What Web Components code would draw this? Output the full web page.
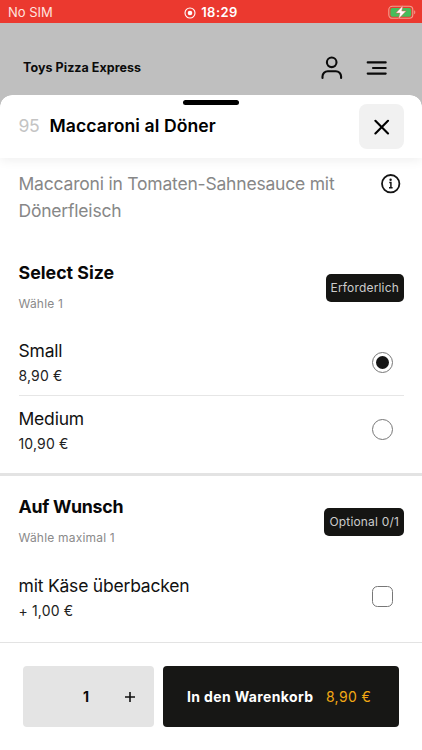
<!DOCTYPE html>
<html lang="de">
<head>
<meta charset="utf-8">
<title>Toys Pizza Express</title>
<style>
html,body{margin:0;height:100%;overflow:hidden;background:#fff}
body{font-family:Inter,"Liberation Sans",sans-serif;color:#080808}
</style>
</head>
<body>
<order-app></order-app>
<script>
const define = (name, markup) => {
  const template = document.createElement('template');
  template.innerHTML = markup;
  customElements.define(name, class extends HTMLElement {
    constructor() {
      super();
      this.attachShadow({mode: 'open'}).append(template.content.cloneNode(true));
    }
  });
};

define('status-bar', `
<style>
:host{display:grid;grid-template-columns:1fr auto 1fr;align-items:center;height:23px;background:#eb392f;color:#fff;font-size:13px;line-height:23px;box-sizing:border-box;padding:1px 6px 0 8px}
.carrier{color:#ffe3df;letter-spacing:0}
.time{display:flex;align-items:center;gap:5px;font-weight:600;letter-spacing:.45px;margin-left:-2px}
.battery{justify-self:end}
svg{display:block}
</style>
<span class="carrier">No SIM</span>
<span class="time"><svg width="12" height="12" viewBox="0 0 12 12"><circle cx="6" cy="6" r="5" fill="none" stroke="#fff" stroke-width="1.1"/><circle cx="6" cy="6" r="2.3" fill="#fff"/></svg><span>18:29</span></span>
<svg class="battery" width="28" height="16" viewBox="0 0 28 16"><g transform="translate(0 .5)"><rect x=".8" y=".8" width="24" height="12" rx="3.5" fill="none" stroke="#f2a08f" stroke-width="1.1"/><rect x="2.4" y="2.4" width="20.8" height="8.8" rx="2" fill="#46bd5b"/><path d="M26.2 4.8c1.5.5 1.5 3.5 0 4z" fill="#f2a08f"/><path d="M15-.1 7.8 7.6h4.2l-1.6 6 7.8-8.1h-4.4z" fill="#fff" stroke="#e0584a" stroke-width=".5"/></g></svg>`);

define('shop-bar', `
<style>
:host{display:flex;align-items:center;height:89px;box-sizing:border-box;padding:0 34px 0 23px;background:#bfbfbf;color:#0b0b0b}
.name{flex:1;font-size:12.5px;font-weight:700;letter-spacing:.05px}
svg{display:block}
.user{margin-right:22px}
</style>
<span class="name">Toys Pizza Express</span>
<svg class="user" width="24" height="26" viewBox="0 0 24 26" fill="none" stroke="#0b0b0b" stroke-width="2.1" stroke-linecap="round"><circle cx="11.7" cy="7.3" r="4.8"/><path d="M2.5 23v-1.5a5.3 5.3 0 0 1 5.3-5.3h8a5.3 5.3 0 0 1 5.3 5.3V23"/></svg>
<svg width="22" height="16" viewBox="0 0 22 16" fill="none" stroke="#0b0b0b" stroke-width="2.1" stroke-linecap="round"><path d="M1.7 2.4h18M7 8h12.7M1.7 13.6h18"/></svg>`);

define('sheet-header', `
<style>
:host{display:flex;align-items:center;height:63px;box-sizing:border-box;padding:0 18px 0 18.5px;background:#fff;border-radius:12px 12px 0 0;position:relative;box-shadow:0 2px 12px rgba(0,0,0,.07);clip-path:inset(0 0 -16px 0 round 12px 12px 0 0)}
.grip{position:absolute;left:183px;top:5px;width:56px;height:5px;border-radius:3px;background:#000}
h1{flex:1;margin:0;padding-bottom:2px;font-size:17.6px;line-height:24px;font-weight:600;color:#000;display:flex;gap:10px;letter-spacing:.08px}
.no{font-weight:400;color:#c4c4c4;letter-spacing:-.3px}
.close{display:grid;place-items:center;width:45px;height:45px;border-radius:8px;background:#f1f1f1}
svg{display:block}
</style>
<div class="grip"></div>
<h1><span class="no"><slot name="number"></slot></span><span><slot></slot></span></h1>
<div class="close"><svg width="16" height="16" viewBox="0 0 16 16" fill="none" stroke="#000" stroke-width="2.1" stroke-linecap="round"><path d="M1.4 1.8 14 14.4M14 1.8 1.4 14.4"/></svg></div>`);

define('dish-description', `
<style>
:host{display:flex;justify-content:space-between;align-items:flex-start;padding:12px 21px 0 18.5px;height:103px;box-sizing:border-box;color:#878787;font-size:17.5px;line-height:27px;letter-spacing:-.2px}
p{margin:0;width:325px}
svg{display:block;margin-top:4px}
</style>
<p><slot></slot></p>
<svg width="20" height="20" viewBox="0 0 20 20" fill="none" stroke="#141414"><circle cx="9.7" cy="9.7" r="8.7" stroke-width="1.8"/><path d="M8.3 8.5h1.6v5.2M8 13.8h3.6" stroke-width="1.5"/><circle cx="9.6" cy="5.7" r="1.2" fill="#141414" stroke="none"/></svg>`);

define('option-group', `
<style>
:host{display:block;padding:0 18px 0 18.5px}
header{display:flex;justify-content:space-between;align-items:flex-start;height:68px}
h2{margin:0;font-size:17.8px;line-height:24px;font-weight:700;letter-spacing:var(--title-spacing,0);color:#080808}
p{margin:12px 0 0;font-size:12px;line-height:14px;color:#8a8a8a;letter-spacing:.2px}
.badge{margin-top:12.5px;height:28px;box-sizing:border-box;border-radius:5px;background:#151513;color:#ccc;font-size:12px;line-height:28px;padding:0 5px;letter-spacing:.18px;white-space:nowrap}
</style>
<header><div><h2><slot name="title"></slot></h2><p><slot name="hint"></slot></p></div><div class="badge"><slot name="badge"></slot></div></header>
<slot></slot>`);

define('option-row', `
<style>
:host{display:flex;justify-content:space-between;align-items:center;height:69px;box-sizing:border-box;padding-right:11.5px}
.name{font-size:17.5px;line-height:26px;color:#111;letter-spacing:-.2px}
.price{font-size:14px;line-height:23px;color:#222;letter-spacing:.15px}
.mark{display:grid;place-items:center;width:21px;height:21px;box-sizing:border-box;border:1px solid #777;border-radius:50%}
:host(:not([selected])) .mark{margin-bottom:2px}
:host([kind=check]){height:68px}
:host([kind=check]) .mark{border-radius:5.5px}
:host([selected]) .mark::after{content:"";width:13px;height:13px;border-radius:50%;background:#151515}
:host([lined]){border-bottom:1px solid #e6e6e6;height:67px}
</style>
<div><div class="name"><slot></slot></div><div class="price"><slot name="price"></slot></div></div><div class="mark"></div>`);

define('cart-bar', `
<style>
:host{display:flex;gap:9.5px;height:108px;box-sizing:border-box;padding:22.7px 23px 0;border-top:1px solid #e3e3e3;background:#fff}
.qty,.add{height:61.5px;border-radius:4px;display:flex;align-items:center;box-sizing:border-box;padding-bottom:1px}
.qty{width:130.5px;background:#e4e4e4;padding:0 18px 0 60px;justify-content:space-between;font-weight:700;font-size:14px}
.add{flex:1;background:#171715;justify-content:center;gap:12.5px;font-size:14px;color:#fff;padding:0 4px 0 0}
.add b{font-weight:700;letter-spacing:.37px}
.add span{color:#f2a814;letter-spacing:.35px}
svg{display:block;margin-top:1px}
</style>
<div class="qty"><span>1</span><svg width="12" height="12" viewBox="0 0 12 12" stroke="#111" stroke-width="1.6"><path d="M6 1v10M1 6h10"/></svg></div>
<div class="add"><b>In den Warenkorb</b><span>8,90 €</span></div>`);

define('order-app', `
<style>
:host{display:flex;flex-direction:column;width:422px;height:750px;overflow:hidden;background:#fff}
sheet-header{margin-top:-17px}
.size{height:212px}
.extra{border-top:3px solid #e3e3e3;padding-top:19px;height:147px;--title-spacing:-.3px}
</style>
<status-bar></status-bar>
<shop-bar></shop-bar>
<sheet-header><span slot="number">95</span>Maccaroni al Döner</sheet-header>
<dish-description>Maccaroni in Tomaten-Sahnesauce mit Dönerfleisch</dish-description>
<option-group class="size"><span slot="title">Select Size</span><span slot="hint">Wähle 1</span><span slot="badge">Erforderlich</span>
<option-row selected lined>Small<span slot="price">8,90 €</span></option-row>
<option-row>Medium<span slot="price">10,90 €</span></option-row>
</option-group>
<option-group class="extra"><span slot="title">Auf Wunsch</span><span slot="hint">Wähle maximal 1</span><span slot="badge">Optional 0/1</span>
<option-row kind="check">mit Käse überbacken<span slot="price">+ 1,00 €</span></option-row>
</option-group>
<cart-bar></cart-bar>`);
</script>
</body>
</html>
